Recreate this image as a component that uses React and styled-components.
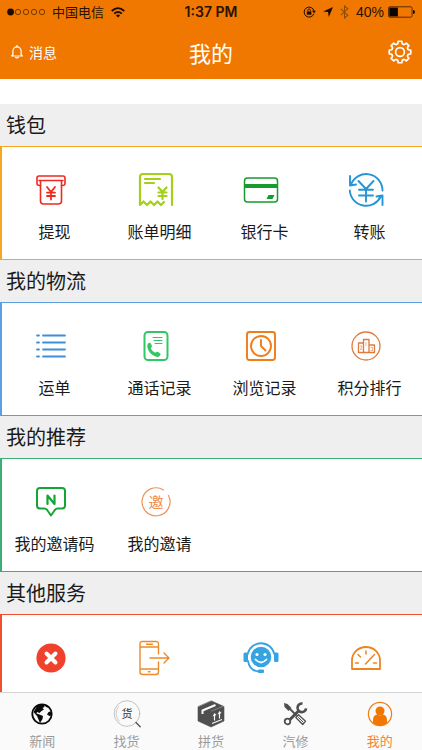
import React from "react";
import styled, { createGlobalStyle } from "styled-components";

const GlobalStyle = createGlobalStyle`
  *, *::before, *::after { box-sizing: border-box; }
  body {
    margin: 0;
    background: #fff;
    font-family: "Noto Sans CJK SC", "Noto Sans", sans-serif;
    color: #1a1a1a;
  }
  button { font: inherit; color: inherit; background: none; border: 0; padding: 0; cursor: pointer; }
  a { color: inherit; text-decoration: none; }
  svg { display: block; flex: none; }
`;

const Screen = styled.div`
  display: flex;
  flex-direction: column;
  height: 100vh;
`;

const Header = styled.header`
  flex: none;
  background: #f07800;
`;

const StatusBar = styled.div`
  display: flex;
  justify-content: space-between;
  align-items: center;
  height: 24px;
  padding: 0 7px;
  color: #2a1200;
  font-size: 13px;
  line-height: 24px;
`;

const StatusGroup = styled.div`
  flex: 1;
  display: flex;
  align-items: center;
  gap: 7px;
  justify-content: ${(p) => p.$align};
`;

const Clock = styled.time`
  font-family: Inter, "Liberation Sans", sans-serif;
  font-weight: 600;
  font-size: 14px;
`;

const BatteryLevel = styled.span`
  display: flex;
  align-items: center;
  gap: 4px;
  font-family: "Liberation Sans", sans-serif;
  font-size: 14px;
`;

const TitleBar = styled.div`
  display: grid;
  grid-template-columns: 1fr auto 1fr;
  align-items: center;
  height: 55px;
  padding: 0 10px;
  color: #fff;
`;

const Title = styled.h1`
  margin: 0;
  font-size: 22px;
  line-height: 32px;
  font-weight: 400;
`;

const MessageButton = styled.button`
  justify-self: start;
  display: flex;
  align-items: center;
  gap: 5px;
  font-size: 14px;
  line-height: 20px;
`;

const SettingsButton = styled.button`
  justify-self: end;
`;

const Content = styled.main`
  flex: 1;
  min-height: 0;
  overflow-y: auto;
  scrollbar-width: none;
  padding-top: 25px;
`;

const SectionTitle = styled.h2`
  margin: 0;
  padding: 0 6px;
  background: #efefef;
  font-size: 20px;
  line-height: 42px;
  font-weight: 400;
`;

const Panel = styled.div`
  display: grid;
  grid-template-columns: repeat(4, 1fr);
  height: 114px;
  border: solid ${(p) => p.$color};
  border-width: 1px 0 1px 2px;
`;

const Cell = styled.button`
  display: flex;
  flex-direction: column;
  align-items: center;
  padding-top: 25px;
  gap: 11px;
  font-size: 16px;
  line-height: 24px;
  white-space: nowrap;
`;

const CellIcon = styled.span`
  padding-right: 8px;
`;

const TabBar = styled.nav`
  flex: none;
  display: grid;
  grid-template-columns: repeat(5, 1fr);
  height: 58px;
  background: #fafafa;
  border-top: 1px solid #d4d4d4;
`;

const Tab = styled.a`
  display: flex;
  flex-direction: column;
  align-items: center;
  padding-top: 7px;
  gap: 3px;
  font-size: 13px;
  line-height: 20px;
  color: ${(p) => (p.$active ? "#f5813a" : "#9a9a9a")};
`;

const Line = ({ size = 36, color, width = 2, children }) => (
  <svg width={size} height={size} viewBox={`0 0 ${size} ${size}`} fill="none" stroke={color}
    strokeWidth={width} strokeLinecap="round" strokeLinejoin="round" aria-hidden="true">
    {children}
  </svg>
);

const SignalDots = () => (
  <svg width="38" height="8" viewBox="0 0 38 8" aria-hidden="true">
    <circle cx="3.6" cy="4" r="3.4" fill="#1d0c00" />
    {[11, 19, 27, 35].map((x) => (
      <circle key={x} cx={x} cy="4" r="2.7" fill="none" stroke="#5a2c00" strokeWidth=".8" />
    ))}
  </svg>
);

const Wifi = () => (
  <svg width="14" height="11" viewBox="0 0 14 11" fill="none" stroke="#1d0c00" strokeWidth="1.8" aria-hidden="true">
    <path d="M.7 4Q7-1.8 13.3 4M3.2 6.6q3.8-3.3 7.6 0" />
    <path d="M7 10.6 4.9 8.4q2.1-1.6 4.2 0z" fill="#1d0c00" stroke="none" />
  </svg>
);

const RotationLock = () => (
  <svg width="13" height="12" viewBox="0 0 13 12" fill="none" stroke="#1d0c00" aria-hidden="true">
    <path d="M10.9 7.6A5 5 0 1 1 11 5" />
    <path d="M8.9 4.7h4L11 7.3z" fill="#1d0c00" stroke="none" />
    <rect x="3.8" y="5.4" width="4.6" height="3.3" fill="#1d0c00" stroke="none" />
    <path d="M4.8 5.4V4.3a1.3 1.3 0 0 1 2.6 0v1.1" strokeWidth=".9" />
  </svg>
);

const Location = () => (
  <svg width="10" height="10" viewBox="0 0 10 10" aria-hidden="true">
    <path d="M10 0 5.8 10 5 5 0 4.400z" fill="#1d0c00" />
  </svg>
);

const Bluetooth = () => (
  <svg width="9" height="14" viewBox="0 0 9 14" fill="none" stroke="#8f4a08" strokeWidth="1.1" aria-hidden="true">
    <path d="m.8 3.800 7 6.400L4.500 13V1l3.300 2.800-7 6.400" />
  </svg>
);

const BatteryIcon = () => (
  <svg width="27" height="12" viewBox="0 0 27 12" aria-hidden="true">
    <rect x=".5" y=".8" width="23.6" height="10.4" rx="1.5" fill="none" stroke="#4a2300" strokeWidth=".9" />
    <rect x="1.3" y="1.6" width="8.6" height="8.8" fill="#0c0500" />
    <path d="M25 4a2 2 0 0 1 0 4z" fill="#1d0c00" />
  </svg>
);

const Bell = () => (
  <svg width="14" height="14" viewBox="0 0 14 14" fill="none" stroke="#fff" strokeWidth="1.2" strokeLinejoin="round" aria-hidden="true">
    <path d="M2.9 9.8V6a4.1 4.1 0 0 1 8.2 0v3.8l1.3 1.2H1.6z" />
    <path d="M7 .5v1.4M5.6 12.2c.5 1 2.3 1 2.8 0" strokeLinecap="round" />
  </svg>
);

const gearPoint = (angle, radius) =>
  `${(12 + radius * Math.sin(angle)).toFixed(2)} ${(12 - radius * Math.cos(angle)).toFixed(2)}`;

// Eight rounded teeth, joined by curves that dip between them.
const gearPath = Array.from({ length: 8 }, (_, i) => {
  const a = (i * Math.PI) / 4;
  return `${i ? "L" : "M"}${gearPoint(a - 0.17, 10.9)}L${gearPoint(a + 0.17, 10.9)}` +
    `Q${gearPoint(a + 0.25, 7.6)} ${gearPoint(a + 0.393, 8.6)}` +
    `Q${gearPoint(a + 0.535, 7.6)} ${gearPoint(a + 0.615, 10.9)}`;
}).join("") + "Z";

const Gear = () => (
  <svg width="24" height="24" viewBox="0 0 24 24" fill="none" stroke="#fff" strokeWidth="1.7" strokeLinejoin="round" aria-hidden="true">
    <path d={gearPath} />
    <circle cx="12" cy="12" r="4.4" />
  </svg>
);

const Withdraw = () => (
  <Line color="#ee2a20" width={1.6}>
    <path d="M7.500 13.500h-1q-2.500 0-2.500-2V6q0-2 2-2h24q2 0 2 2v5.500q0 2-2.500 2h-1" />
    <path d="M7.500 8.500h21V29q0 3-3 3h-15q-3 0-3-3zM6 8.500h24" />
    <path d="m14 15 4 5 4-5M18 20v7.500M14 20.600h8M14 24h8" strokeWidth="1.8" />
  </Line>
);

const Bill = () => (
  <Line color="#a4cf1b" width={2.2}>
    <path d="M34 33V5q0-3-3-3H5Q2 2 2 5v28l3.500-3.500L9 33l3.500-3.500L16 33l3.500-3.500L23 33l3-3" />
    <path d="M7 7h15M7 11h9M20.500 15.500l4 4.500 4-4.500M24.500 20v7M20.500 20.500h8M20.500 24h8" />
  </Line>
);

const Card = () => (
  <Line color="#169c2c" width={1.5}>
    <rect x="1.500" y="6" width="33" height="24" rx="3" />
    <path d="M1.500 12h33v4h-33z" fill="#169c2c" stroke="none" />
    <path d="M25.500 23h6l-2 4h-6z" fill="#169c2c" stroke="none" />
  </Line>
);

const Transfer = () => (
  <Line color="#2596d5" width={1.9}>
    <path d="M34.500 18.500A16.300 16.300 0 0 0 3 12.500M2 4v9.500l6-1M1.800 18.500A16.300 16.300 0 0 0 33 24M34.500 33v-9.500l-6 1" />
    <path d="m10.500 9 7.500 8 7.500-8M18 17v12.500M11 17.800h14M11 23.500h14" />
  </Line>
);

const Waybill = () => (
  <Line color="#3d8fd8" width={1.8}>
    <path d="M4 7.500h2M4 14.500h2M4 21.500h2M4 28.500h2M10 7.500h22M10 14.500h22M10 21.500h22M10 28.500h22" />
  </Line>
);

const CallLog = () => (
  <Line color="#32c766" width={2}>
    <rect x="6.500" y="4" width="23" height="28" rx="3.500" />
    <path d="M15 9.500h9M16 12.500h8M17 15.500h7" strokeWidth="1" />
    <path d="M10.500 15q2-.8 2.800 1.300l.6 2q.2 1-1.200 2 1.300 3.200 4.600 4.500 1.500-1.300 2.700-.8l2 1.200q1.400 1-.6 3-1.500 1.200-4 .3Q10.500 25.500 9.300 19q-.2-3 1.200-4z" fill="#32c766" stroke="none" />
  </Line>
);

const History = () => (
  <Line color="#ef7d1a" width={1.9}>
    <rect x="4" y="4" width="28" height="28" rx="2.500" />
    <circle cx="18" cy="18" r="10" />
    <path d="M18 12v6l4.500 4.500" />
  </Line>
);

const Ranking = () => (
  <Line color="#e0793a" width={1.3}>
    <circle cx="18" cy="18" r="14" />
    <path d="M10.500 24.500v-9.500h5v9.500zM15.500 24.500V11.500h5.500v13zM21 24.500v-7.500h5.500v7.500z" />
    <path d="M12.500 18h1.500l-1.500 3.500h1.500M18 14.500v3M23 19.500h1.500v3H23" strokeWidth=".8" opacity=".7" />
  </Line>
);

const InviteCode = () => (
  <Line color="#15a534" width={2}>
    <path d="M7 4h22q3 0 3 3v14.500q0 3-3 3h-4.500q-2 0-3 2L18 31.500l-3.500-5q-1-2-3-2H7q-3 0-3-3V7q0-3 3-3z" />
    <path d="M14.500 20V11.500l7 8.500V11.500" strokeWidth="2.200" />
  </Line>
);

const SvgText = styled.text`
  font-family: "Noto Sans CJK SC", sans-serif;
  font-size: ${(p) => p.$size}px;
  text-anchor: middle;
  stroke: none;
`;

const Invite = () => (
  <Line color="#ef9259" width={1.2}>
    <path d="M25.500 6A14 14 0 1 0 30.500 11.500" />
    <SvgText x="18" y="23.500" $size={15} fill="#ef8a4d">邀</SvgText>
  </Line>
);

const Close = () => (
  <Line color="#fff" width={4}>
    <circle cx="18" cy="18" r="14.600" fill="#f0412c" stroke="none" />
    <path d="m13.500 13.500 9 9M22.500 13.500l-9 9" />
  </Line>
);

const PhoneOut = () => (
  <Line color="#ec8a2c" width={1.4}>
    <path d="M20.500 14V4q0-2.500-2.500-2.500H4.500Q2 1.500 2 4v28q0 2.500 2.500 2.500H18q2.500 0 2.500-2.500V22M2 7h18.500M2 29h18.500M8.500 4.300h6M10.500 31.800h1.500" />
    <path d="M12 18h19M26 13l5 5-5 5" />
  </Line>
);

const Support = () => (
  <Line color="#36a3e2" width={1.8}>
    <circle cx="18" cy="17" r="10.300" fill="#36a3e2" stroke="none" />
    <path d="M4.700 14a13.600 13.600 0 0 1 26.600 0M5 21q1.500 10 11.500 10.500" />
    <rect x=".5" y="12.500" width="4.500" height="9.500" rx="1.500" fill="#36a3e2" stroke="none" />
    <rect x="31" y="12.500" width="4.500" height="9.500" rx="1.500" fill="#36a3e2" stroke="none" />
    <rect x="15" y="29.500" width="6" height="3.500" rx="1" fill="#36a3e2" stroke="none" />
    <path d="M12.500 19.500q5.500 6 11 0" stroke="#fff" />
    <circle cx="14" cy="14.500" r="1.600" fill="#fff" stroke="none" />
    <circle cx="22" cy="14.500" r="1.600" fill="#fff" stroke="none" />
  </Line>
);

const Gauge = () => (
  <Line color="#ee841f" width={1.8}>
    <path d="M4 29V20.500a14 13.500 0 0 1 28 0V29z" />
    <path d="M18 11v3M10 14.500l2.500 2.500M7.500 23h3M25.500 23h3M17.500 24l9-9.500" strokeWidth="1.5" />
  </Line>
);

const Globe = () => (
  <Line size={28} color="#0b0b0b" width={1.8}>
    <circle cx="14" cy="14" r="9.700" />
    <path d="M9 6.200q3-2 7-1.500l.5 2.300-2 1 1.500 1.500-2.500 1.500-2 2-2.500-1-.5 1.500 3 1 3.500 1.500-.5 3-2.500 4-1.500-3.500-1.500-3.500-3.500-4zM24 11l-3.500 1-1.500 2.500 2.500 1.500 2.300-.5zM17 6l2 1.500 2-.5-2.500-2z" fill="#0b0b0b" stroke="none" />
  </Line>
);

const FindCargo = () => (
  <Line size={28} color="#aaa" width={1}>
    <circle cx="14" cy="13.500" r="12.800" strokeWidth=".7" />
    <path d="M5.500 6.500a11 11 0 0 0 1 15" stroke="#bbb" strokeWidth=".7" />
    <path d="m23 22.500 4.200 4.200" stroke="#555" strokeWidth="1.4" />
    <SvgText x="14" y="17.500" $size={11} fill="#333">货</SvgText>
  </Line>
);

const Package = () => (
  <Line size={28} color="#fafafa" width={1.4}>
    <path d="M14.500 1 27 6.500v14.500L14 27 1 21V7z" fill="#4f4f4f" stroke="#4f4f4f" strokeWidth=".6" />
    <path d="M5.500 14v-3.500L18.500 5" strokeWidth="2" strokeLinecap="butt" />
    <path d="M14.500 11 27 6" strokeWidth=".6" opacity=".5" />
    <path d="M17.500 20.500v-5.500M22.500 18.500V13M15 23.500l10-4" strokeWidth="1.2" strokeLinecap="butt" />
    <path d="m15.500 16.500 2-3.500 2 2zM20.500 14.500l2-3.500 2 2z" fill="#fafafa" stroke="none" />
  </Line>
);

const Tools = () => (
  <Line size={28} color="#4f4f4f" width={3}>
    <path d="m3 3 3.500 1 4 4-3 3-4-4z" fill="#4f4f4f" stroke="none" />
    <path d="m9 9 6 6" strokeWidth="1.8" />
    <path d="m9 19.500 9.500-9.500" strokeLinecap="butt" />
    <path d="M21.500 3.600a4.300 4.300 0 1 0 3.600 4.800" strokeWidth="2.6" strokeLinecap="butt" />
    <circle cx="6.500" cy="21.500" r="2.800" strokeWidth="1.8" />
    <path d="m14.800 17.500 2.700-2.700 7 6.500-2.800 3.200z" strokeWidth="1.3" />
    <path d="m17.500 17.500 4.500 4.500" strokeWidth="1" />
  </Line>
);

const Person = () => (
  <Line size={28} color="#f07c14" width={1.2}>
    <circle cx="14" cy="14" r="11.600" />
    <circle cx="14" cy="11" r="4.500" fill="#f07800" stroke="none" />
    <path d="M7 23v-3q0-5 4.500-5.500 2.500 1.800 5 0Q21 15 21 20v3q-3.500 2.600-7 2.600T7 23z" fill="#f07800" stroke="none" />
  </Line>
);

const sections = [
  { title: "钱包", color: "#f5a623", items: [["提现", Withdraw], ["账单明细", Bill], ["银行卡", Card], ["转账", Transfer]] },
  { title: "我的物流", color: "#5a9fe0", items: [["运单", Waybill], ["通话记录", CallLog], ["浏览记录", History], ["积分排行", Ranking]] },
  { title: "我的推荐", color: "#3dae76", items: [["我的邀请码", InviteCode], ["我的邀请", Invite]] },
  { title: "其他服务", color: "#f0502f", iconsOnly: true, items: [["关闭", Close], ["手机", PhoneOut], ["客服", Support], ["仪表", Gauge]] },
];

const tabs = [["新闻", Globe], ["找货", FindCargo], ["拼货", Package], ["汽修", Tools], ["我的", Person]];

export default function App() {
  return (
    <Screen>
      <GlobalStyle />
      <Header>
        <StatusBar>
          <StatusGroup $align="flex-start">
            <SignalDots />
            <span>中国电信</span>
            <Wifi />
          </StatusGroup>
          <Clock>1:37 PM</Clock>
          <StatusGroup $align="flex-end">
            <RotationLock />
            <Location />
            <Bluetooth />
            <BatteryLevel>40%<BatteryIcon /></BatteryLevel>
          </StatusGroup>
        </StatusBar>
        <TitleBar>
          <MessageButton type="button"><Bell />消息</MessageButton>
          <Title>我的</Title>
          <SettingsButton type="button" aria-label="设置"><Gear /></SettingsButton>
        </TitleBar>
      </Header>
      <Content>
        {sections.map(({ title, color, items, iconsOnly }) => (
          <section key={title}>
            <SectionTitle>{title}</SectionTitle>
            <Panel $color={color}>
              {items.map(([label, Icon]) => (
                <Cell key={label} type="button" aria-label={label}>
                  <CellIcon><Icon /></CellIcon>
                  {!iconsOnly && <span>{label}</span>}
                </Cell>
              ))}
            </Panel>
          </section>
        ))}
      </Content>
      <TabBar>
        {tabs.map(([label, Icon]) => (
          <Tab key={label} href="#" $active={label === "我的"}>
            <Icon />
            {label}
          </Tab>
        ))}
      </TabBar>
    </Screen>
  );
}
